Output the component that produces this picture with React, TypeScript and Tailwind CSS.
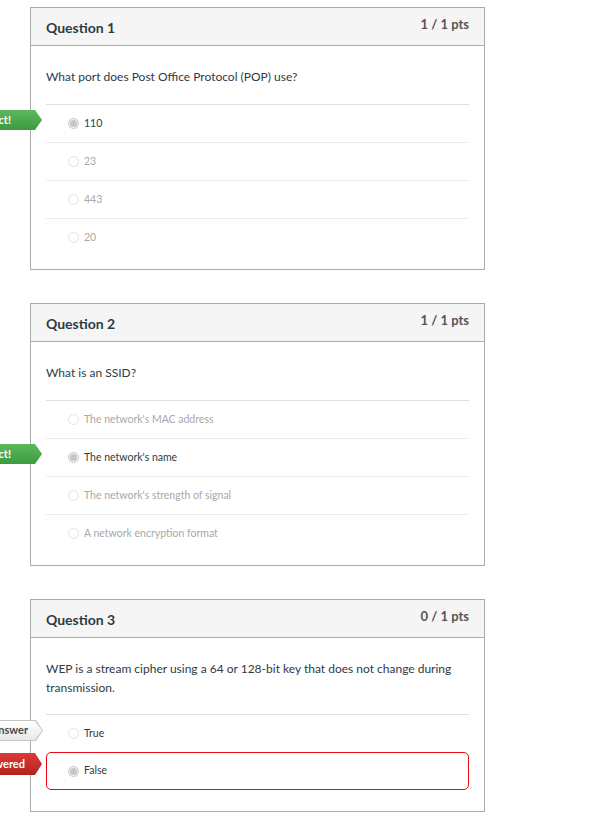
import React from "react";

type Answer = { text: string; selected?: boolean; dark?: boolean; flag?: "correct" | "correctAnswer" | "youAnswered"; wrong?: boolean };
type Q = { title: string; pts: string; text: string; answers: Answer[] };

const questions: Q[] = [
  {
    title: "Question 1",
    pts: "1 / 1 pts",
    text: "What port does Post Office Protocol (POP) use?",
    answers: [
      { text: "110", selected: true, flag: "correct" },
      { text: "23" },
      { text: "443" },
      { text: "20" },
    ],
  },
  {
    title: "Question 2",
    pts: "1 / 1 pts",
    text: "What is an SSID?",
    answers: [
      { text: "The network's MAC address" },
      { text: "The network's name", selected: true, flag: "correct" },
      { text: "The network's strength of signal" },
      { text: "A network encryption format" },
    ],
  },
  {
    title: "Question 3",
    pts: "0 / 1 pts",
    text: "WEP is a stream cipher using a 64 or 128-bit key that does not change during transmission.",
    answers: [
      { text: "True", dark: true, flag: "correctAnswer" },
      { text: "False", selected: true, flag: "youAnswered", wrong: true },
    ],
  },
];

function Flag({ kind }: { kind: "correct" | "correctAnswer" | "youAnswered" }) {
  const clip = "[clip-path:polygon(0_0,calc(100%-7px)_0,100%_50%,calc(100%-7px)_100%,0_100%)]";
  if (kind === "correct") {
    return (
      <div className={`absolute right-full mr-[4px] top-[5px] h-[20px] ${clip} bg-gradient-to-b from-[#5cb85c] to-[#3e9a3e] pl-[8px] pr-[31px] flex items-center whitespace-nowrap text-[11px] font-bold text-white`}>
        Correct!
      </div>
    );
  }
  if (kind === "correctAnswer") {
    return (
      <div className={`absolute right-full mr-[3px] top-[5px] h-[21px] ${clip} bg-[#c4c4c4] pl-[8px] pr-[15px]`}>
        <div className={`absolute inset-[1px] ${clip} bg-gradient-to-b from-[#ffffff] to-[#e8e8e8]`} />
        <div className="relative h-full flex items-center whitespace-nowrap text-[11px] font-bold text-[#4a4a4a]">Correct Answer</div>
      </div>
    );
  }
  return (
    <div className={`absolute right-full mr-[4px] top-[1px] h-[22px] ${clip} bg-gradient-to-b from-[#dd3b37] to-[#b3221f] pl-[8px] pr-[17px] flex items-center whitespace-nowrap text-[11px] font-bold text-white`}>
      You Answered
    </div>
  );
}

function Radio({ selected }: { selected?: boolean }) {
  return (
    <span
      className={`inline-flex items-center justify-center w-[11px] h-[11px] rounded-full border ${
        selected ? "border-[#c8c8c8] bg-[#f2f2f2]" : "border-[#e2e2e2] bg-white"
      }`}
    >
      {selected && <span className="w-[7px] h-[7px] rounded-full bg-[#c6c6c6]" />}
    </span>
  );
}

function AnswerRow({ a, first }: { a: Answer; first: boolean }) {
  if (a.wrong) {
    return (
      <div className="relative h-[38px]">
        <Flag kind={a.flag!} />
        <div className="h-full border border-[#ee0612] rounded-[5px] flex items-center pl-[21px] gap-[5px]">
          <Radio selected={a.selected} />
          <span className="text-[10.5px] text-[#2d3b45]">{a.text}</span>
        </div>
      </div>
    );
  }
  return (
    <div className={`relative h-[38px] flex items-center pl-[22px] gap-[5px] ${first ? "border-t border-[#dfdfdf]" : "border-t border-[#ececec]"}`}>
      {a.flag && <Flag kind={a.flag} />}
      <Radio selected={a.selected} />
      <span className={`text-[10.5px] ${a.selected || a.dark ? "text-[#2d3b45]" : "text-[#a8a8a8]"}`}>{a.text}</span>
    </div>
  );
}

function Card({ q, last }: { q: Q; last: boolean }) {
  return (
    <div className="w-[455px] border border-[#ababab] bg-white">
      <div className="h-[38px] bg-[#f5f5f5] border-b border-[#ababab] flex justify-between px-[15px]">
        <div className="pt-[10px] text-[14px] font-bold text-[#2d3b45] leading-[20px]">{q.title}</div>
        <div className="pt-[7px] text-[13px] font-bold text-[#555555] leading-[18px]">{q.pts}</div>
      </div>
      <div className={`px-[15px] pt-[21px] ${last ? "pb-[21px]" : "pb-[13px]"}`}>
        <div className={`text-[12px] leading-[19px] text-[#2d3b45] ${last ? "mb-[17px]" : "mb-[18px]"}`}>{q.text}</div>
        {q.answers.map((a, i) => (
          <AnswerRow key={i} a={a} first={i === 0} />
        ))}
      </div>
    </div>
  );
}

export default function App() {
  return (
    <div className="min-h-[831px] bg-white pl-[30px] pt-[7px] flex flex-col gap-[33px] overflow-hidden" style={{ fontFamily: "Lato, 'Open Sans', sans-serif" }}>
      {questions.map((q, i) => (
        <Card key={i} q={q} last={i === questions.length - 1} />
      ))}
    </div>
  );
}
